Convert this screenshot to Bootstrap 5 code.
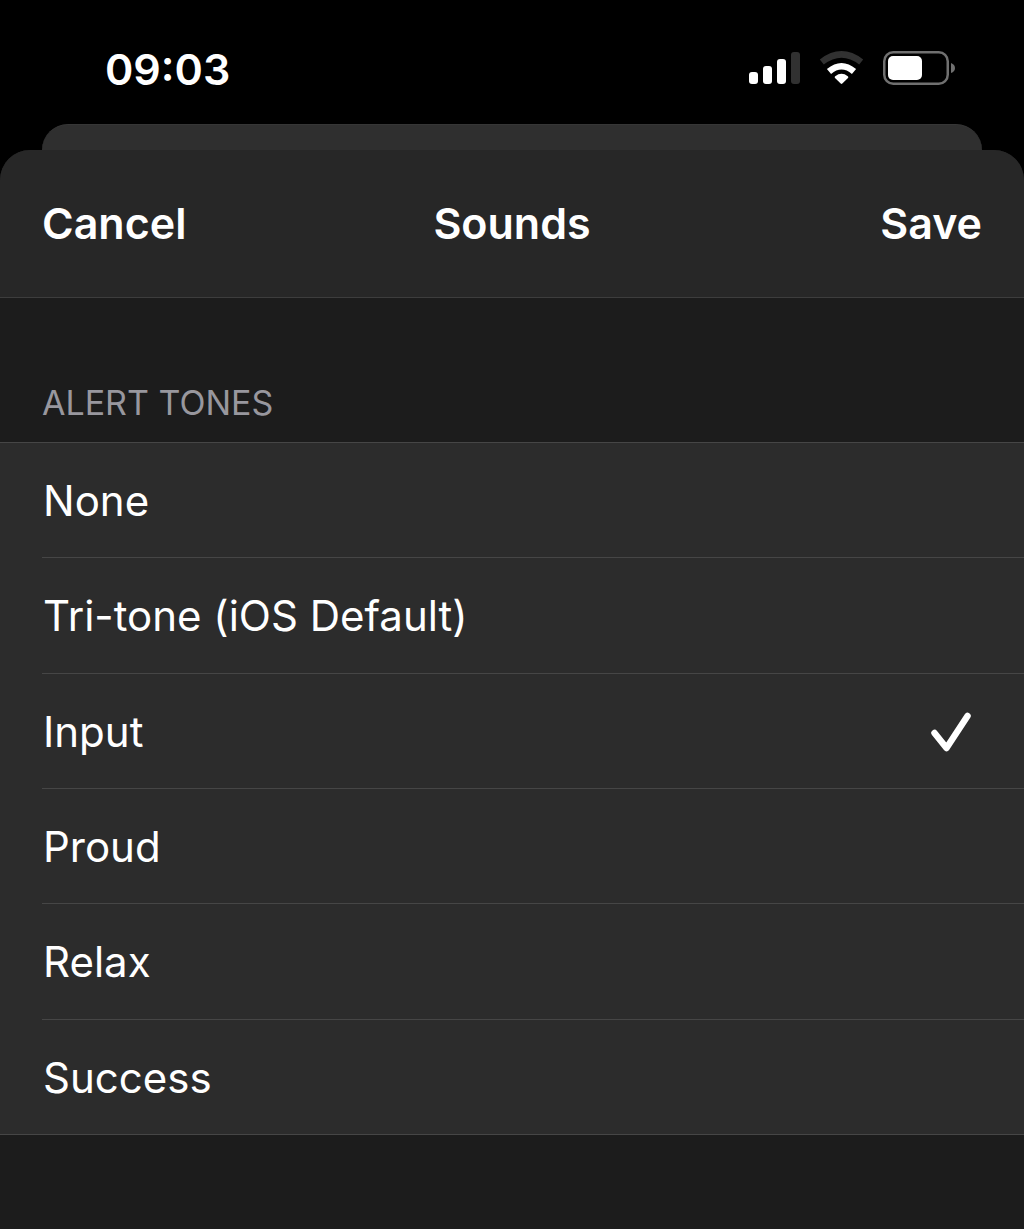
<!DOCTYPE html>
<html lang="en" data-bs-theme="dark">
<head>
<meta charset="utf-8">
<meta name="viewport" content="width=device-width, initial-scale=1">
<title>Sounds</title>
<link href="https://cdn.jsdelivr.net/npm/bootstrap@5.3.0/dist/css/bootstrap.min.css" rel="stylesheet">
<style>
  body { font-family: Inter, "Liberation Sans", sans-serif; background: #000; color: #fff; font-size: 42px; line-height: 52px; }
  .status-bar { height: 124px; padding: 0 68px 0 105px; }
  .status-bar time { padding-top: 43px; font-size: 43px; }
  .status-icons { margin-top: 50px; }
  .back-sheet { height: 26px; margin: 0 42px; background: #2f2f2f; border-top: 1px solid #363636; border-radius: 26px 26px 0 0; }
  .front-sheet { background: #1c1c1c; border-radius: 30px 30px 0 0; }
  .sheet-head { height: 148px; padding: 0 42px 2px; background: #272727; border-bottom: 1px solid #3d3d3d; }
  .sheet-head .btn, .sheet-head h1 { font-size: 43px; line-height: 52px; font-weight: 600; color: #fff; }
  .tone-legend { padding: 82px 42px 17px; font-size: 34px; line-height: 45px; color: #98979e; }
  .tone-list { min-height: 693px; background: #2c2c2c; border-top: 1px solid #464646; border-bottom: 1px solid #464646; }
  .tone-row { flex: 1 0 0; padding: 2px 53px 0 1px; margin-left: 42px; border-bottom: 1px solid #464646; cursor: pointer; }
  .tone-row:last-child { border-bottom: 0; }
  .tone-row svg { visibility: hidden; }
  .btn-check:checked + .tone-row svg { visibility: visible; }
  .btn-check:focus-visible + .tone-row { outline: 2px solid #8e8e93; }
</style>
<script src="https://cdn.jsdelivr.net/npm/bootstrap@5.3.0/dist/js/bootstrap.bundle.min.js"></script>
</head>
<body class="min-vh-100 d-flex flex-column">
<div class="status-bar d-flex justify-content-between align-items-start">
  <time class="fw-semibold">09:03</time>
  <svg class="status-icons" width="208" height="36" viewBox="0 0 208 36" role="img" aria-label="Signal, Wi-Fi and battery">
    <g fill="#fff">
      <rect x="1" y="22" width="9" height="12" rx="3"/>
      <rect x="15" y="16" width="9" height="18" rx="3"/>
      <rect x="29" y="9" width="9" height="25" rx="3"/>
      <rect x="43" y="2" width="9" height="32" rx="3" fill="#313131"/>
      <path d="M92.700 33.600 87 27.900Q86.200 27 87.200 26.200Q93.500 21.400 99.800 26.200Q100.800 27 100 27.900L94.300 33.600Q93.500 34.200 92.700 33.600Z"/>
    </g>
    <path d="M73.800 12Q93.500-3.200 113.200 12" fill="none" stroke="#313131" stroke-width="6.500"/>
    <path d="M81 21.500Q93.500 11 106 21.500" fill="none" stroke="#fff" stroke-width="6.500"/>
    <rect x="136.250" y="2.250" width="63.500" height="31.500" rx="9" fill="none" stroke="#707070" stroke-width="2.500"/>
    <rect x="140" y="6" width="34" height="24" rx="5" fill="#fff"/>
    <path d="M203 13q4 1.500 4 5t-4 5z" fill="#707070"/>
  </svg>
</div>
<div class="back-sheet"></div>
<main class="front-sheet flex-grow-1 overflow-hidden">
  <header class="sheet-head row g-0 align-items-center">
    <div class="col d-flex justify-content-start"><button type="button" class="btn border-0 p-0">Cancel</button></div>
    <h1 class="col-auto m-0">Sounds</h1>
    <div class="col d-flex justify-content-end"><button type="button" class="btn border-0 p-0">Save</button></div>
  </header>
  <form>
    <fieldset>
      <legend class="tone-legend m-0">ALERT TONES</legend>
      <div class="tone-list d-flex flex-column">
        <input class="btn-check" type="radio" name="tone" id="none">
        <label class="tone-row d-flex align-items-center justify-content-between" for="none">None <svg width="40" height="40" viewBox="0 0 40 40"><path d="M3.500 21 15.500 36 36.500 4" fill="none" stroke="#fff" stroke-width="6.500" stroke-linecap="round" stroke-linejoin="round"/></svg></label>
        <input class="btn-check" type="radio" name="tone" id="tritone">
        <label class="tone-row d-flex align-items-center justify-content-between" for="tritone">Tri-tone (iOS Default) <svg width="40" height="40" viewBox="0 0 40 40"><path d="M3.500 21 15.500 36 36.500 4" fill="none" stroke="#fff" stroke-width="6.500" stroke-linecap="round" stroke-linejoin="round"/></svg></label>
        <input class="btn-check" type="radio" name="tone" id="input" checked>
        <label class="tone-row d-flex align-items-center justify-content-between" for="input">Input <svg width="40" height="40" viewBox="0 0 40 40"><path d="M3.500 21 15.500 36 36.500 4" fill="none" stroke="#fff" stroke-width="6.500" stroke-linecap="round" stroke-linejoin="round"/></svg></label>
        <input class="btn-check" type="radio" name="tone" id="proud">
        <label class="tone-row d-flex align-items-center justify-content-between" for="proud">Proud <svg width="40" height="40" viewBox="0 0 40 40"><path d="M3.500 21 15.500 36 36.500 4" fill="none" stroke="#fff" stroke-width="6.500" stroke-linecap="round" stroke-linejoin="round"/></svg></label>
        <input class="btn-check" type="radio" name="tone" id="relax">
        <label class="tone-row d-flex align-items-center justify-content-between" for="relax">Relax <svg width="40" height="40" viewBox="0 0 40 40"><path d="M3.500 21 15.500 36 36.500 4" fill="none" stroke="#fff" stroke-width="6.500" stroke-linecap="round" stroke-linejoin="round"/></svg></label>
        <input class="btn-check" type="radio" name="tone" id="success">
        <label class="tone-row d-flex align-items-center justify-content-between" for="success">Success <svg width="40" height="40" viewBox="0 0 40 40"><path d="M3.500 21 15.500 36 36.500 4" fill="none" stroke="#fff" stroke-width="6.500" stroke-linecap="round" stroke-linejoin="round"/></svg></label>
      </div>
    </fieldset>
  </form>
</main>
</body>
</html>
